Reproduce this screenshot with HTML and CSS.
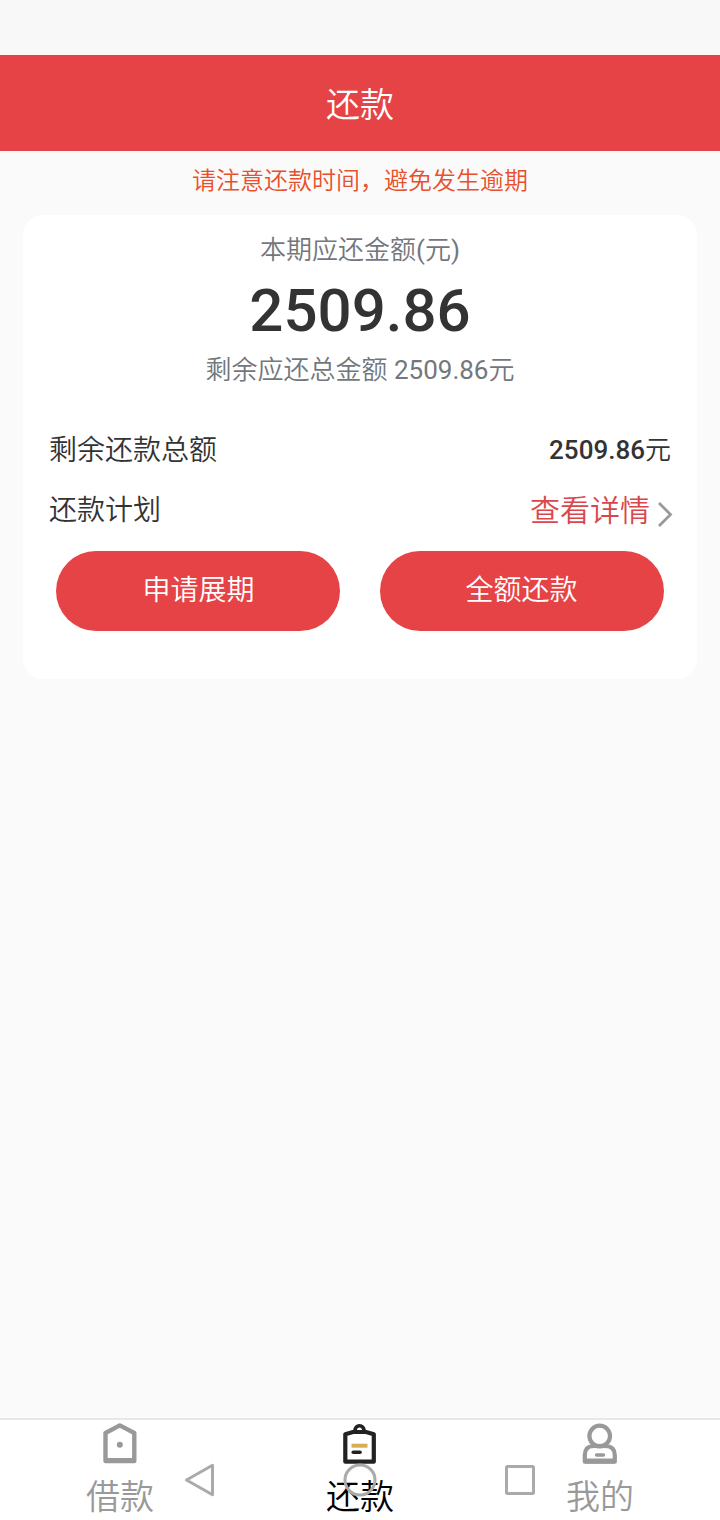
FILE: index.html
```html
<!DOCTYPE html>
<html lang="zh-CN">
<head>
<meta charset="utf-8">
<title>还款</title>
<link rel="stylesheet" href="styles.css">
</head>
<body>
<div class="app">
  <div class="status-bar"></div>
  <header class="header">还款</header>
  <p class="notice">请注意还款时间，避免发生逾期</p>
  <main class="card">
    <div class="summary">
      <div class="summary-label">本期应还金额<span class="latin">(</span>元<span class="latin">)</span></div>
      <div class="amount">2509.86</div>
      <div class="summary-total">剩余应还总金额<span class="latin"> 2509.86</span>元</div>
    </div>
    <div class="row">
      <span class="row-label">剩余还款总额</span>
      <span class="row-value"><b class="number">2509.86</b>元</span>
    </div>
    <div class="row">
      <span class="row-label">还款计划</span>
      <a class="detail-link"><span class="detail-text">查看详情</span>
        <svg class="chevron" width="16" height="28" viewBox="0 0 16 28" fill="none" stroke="#999" stroke-width="2.8"><path d="M2 3 13.5 14.5 2 26"/></svg>
      </a>
    </div>
    <div class="actions">
      <button class="button">申请展期</button>
      <button class="button button-full">全额还款</button>
    </div>
  </main>
  <nav class="tabs">
    <a class="tab">
      <svg width="40" height="44" viewBox="0 0 40 44" fill="none" stroke="#999"><path stroke-width="4.4" stroke-linejoin="round" d="M5.500 13 19.800 5.400 34.300 13V41H5.500Z"/><path stroke-width="5" d="M5 40.500H35"/><circle cx="19.800" cy="24.700" r="3" fill="#999" stroke="none"/></svg>
      <span class="tab-label">借款</span>
    </a>
    <a class="tab tab-active">
      <svg width="40" height="44" viewBox="0 0 40 44" fill="none" stroke="#222"><path stroke-width="4.200" stroke-linejoin="round" d="M5.300 14.300 13 12H26L33.800 14.300V41.700H5.300Z"/><path stroke-width="3.600" d="M14.800 12.500V11Q15.500 5.800 19.500 5.800T24.200 11V12.500"/><path stroke="#d9ad58" stroke-width="4" d="M11.500 25.700H27.500"/><path stroke-width="3.600" stroke-linecap="round" d="M13.300 32.300H20"/></svg>
      <span class="tab-label">还款</span>
    </a>
    <a class="tab">
      <svg width="40" height="44" viewBox="0 0 40 44" fill="none" stroke="#999" stroke-width="4.200"><path stroke-linejoin="round" d="M13 26H26Q34.800 26.500 34.800 35V41.700H4.800V35Q4.800 26.500 13 26Z"/><path stroke-width="5" d="M5 41H35"/><circle cx="19.700" cy="16" r="10.300" fill="#fff"/><path d="M12 26H27"/><path stroke-width="3.400" stroke-linecap="round" d="M16.500 35H23.500"/></svg>
      <span class="tab-label">我的</span>
    </a>
    <div class="system-nav">
      <svg width="36" height="36" viewBox="0 0 36 36"><path stroke-linejoin="round" d="M4.500 18 30.500 3.300V32.700Z"/></svg>
      <svg width="36" height="36" viewBox="0 0 36 36"><circle cx="18" cy="18" r="15"/></svg>
      <svg width="36" height="36" viewBox="0 0 36 36"><rect x="4.500" y="4.500" width="27" height="27" rx="1"/></svg>
    </div>
  </nav>
</div>
</body>
</html>
```

FILE: styles.css
```css
* { box-sizing: border-box; }
body {
  margin: 0;
  background: #fafafa;
  color: #333;
  font-family: Roboto, "Noto Sans CJK SC DemiLight", "Noto Sans CJK SC", sans-serif;
  font-weight: 350;
}
.latin { font-weight: 400; }
.app {
  display: flex;
  flex-direction: column;
  width: 720px;
  height: 1520px;
  overflow: hidden;
}
.status-bar { height: 55px; background: #f8f8f8; }
.header {
  height: 96px;
  background: #e64346;
  color: #fff;
  font-size: 34px;
  line-height: 101px;
  text-align: center;
}
.notice {
  margin: 0;
  height: 64px;
  color: #e8502d;
  font-size: 24px;
  line-height: 60px;
  text-align: center;
}
.card {
  height: 464px;
  margin: 0 23px;
  padding: 17px 26px 0;
  border-radius: 20px;
  background: #fff;
}
.summary { text-align: center; color: #73777c; font-size: 26px; }
.summary-label { height: 36px; line-height: 36px; }
.amount {
  height: 84px;
  color: #333;
  font-size: 60px;
  font-weight: 500;
  line-height: 86px;
}
.summary-total { height: 36px; line-height: 36px; }
.row {
  display: flex;
  justify-content: space-between;
  height: 60px;
  line-height: 60px;
}
.summary + .row { margin-top: 31px; }
.row-label { padding-top: 2px; font-size: 28px; }
.row-value { font-size: 26px; padding-top: 1px; }
.number { font-weight: 500; }
.detail-link {
  display: flex;
  gap: 7px;
  margin-right: -2px;
  color: #d9474c;
  font-size: 30px;
}
.detail-text { padding-top: 2px; }
.chevron { margin-top: 21px; }
.actions {
  display: flex;
  gap: 40px;
  padding: 12px 7px 0;
}
.button {
  width: 284px;
  height: 80px;
  padding: 0 0 7px 1px;
  border: 0;
  border-radius: 40px;
  background: #e64346;
  color: #fff;
  font: inherit;
  font-size: 28px;
}
.button-full { padding: 0 1px 7px 0; }
.tabs {
  position: relative;
  display: flex;
  height: 102px;
  margin-top: auto;
  border-top: 2px solid #e8e8e8;
  background: #fff;
}
.tab {
  display: flex;
  flex: 1;
  flex-direction: column;
  align-items: center;
  color: #999;
  font-size: 34px;
  line-height: 64px;
}
.tab svg { flex: none; }
.tab-label { padding-top: 1px; }
.tab-active { color: #000; }
.system-nav {
  position: absolute;
  top: 42px;
  left: 182px;
  right: 182px;
  display: flex;
  justify-content: space-between;
  fill: none;
  stroke: #aaa;
  stroke-width: 3;
}
```
